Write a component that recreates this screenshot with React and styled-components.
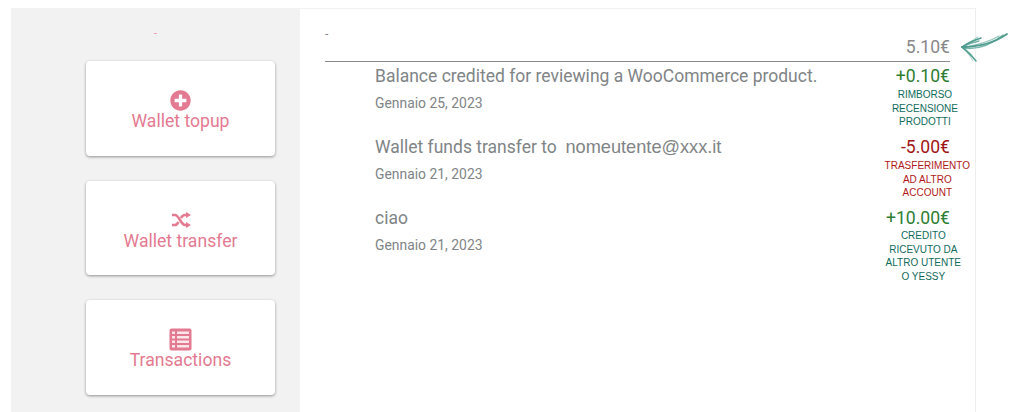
import React from 'react';
import styled, { createGlobalStyle } from 'styled-components';
import { FaPlusCircle } from 'react-icons/fa';

const pink = '#e47a91';

const GlobalStyle = createGlobalStyle`
  html, body {
    margin: 0;
    height: 412px;
    overflow: hidden;
    background: #fff;
    font-family: Roboto, sans-serif;
  }
`;

const Page = styled.div`
  height: 404px;
  padding: 8px 0 0 11px;
  width: 965px;
  display: flex;
`;

const Sidebar = styled.aside`
  width: 289px;
  flex-shrink: 0;
  background: #f2f2f2;
  padding-top: 15px;
  box-sizing: border-box;
  display: flex;
  flex-direction: column;
`;

const SideDash = styled.div`
  height: 38px;
  font-size: 12px;
  line-height: 20px;
  color: #eda5b4;
  text-align: center;
`;

const CardList = styled.div`
  display: flex;
  flex-direction: column;
  gap: 25px;
  padding: 0 25px 0 75px;
`;

const Card = styled.a`
  height: 94.5px;
  background: #fff;
  border-radius: 4px;
  box-shadow: 0 1px 3px rgba(0, 0, 0, 0.4);
  color: ${pink};
  display: flex;
  flex-direction: column;
  align-items: center;
  padding-top: 28px;
  box-sizing: border-box;
  font-size: 17.6px;
  line-height: 22px;
  font-weight: 400;
`;

const CardIcon = styled.span`
  height: 22px;
  display: flex;
  align-items: center;
  font-size: 21px;
  margin-bottom: -1px;
`;

const Content = styled.main`
  width: 676px;
  box-sizing: border-box;
  background: #fff;
  border-top: 1px solid #f1f1f1;
  border-right: 1px solid #eeeeee;
  padding: 15px 25px 0 25px;
  position: relative;
`;

const Header = styled.div`
  height: 37px;
  border-bottom: 1px solid #8a8a8a;
  display: flex;
  justify-content: space-between;
  align-items: flex-end;
  color: #888;
`;

const HeadDash = styled.span`
  align-self: flex-start;
  font-size: 12px;
  line-height: 20px;
`;

const Balance = styled.span`
  font-size: 17.6px;
  line-height: 24px;
  margin-bottom: 2px;
`;

const Arrow = styled.svg`
  position: absolute;
  left: 661px;
  top: 23px;
  width: 48px;
  height: 32px;
`;

const Row = styled.div`
  height: 71px;
  display: flex;
  justify-content: space-between;
  padding-left: 50px;
`;

const Info = styled.div`
  display: flex;
  flex-direction: column;
`;

const Title = styled.div`
  font-size: 17.5px;
  line-height: 24px;
  margin-top: 2px;
  color: #808486;
  white-space: pre;
`;

const Email = styled.span`
  font-family: 'Liberation Sans', Arial, sans-serif;
  font-size: 18.2px;
`;

const DateLine = styled.div`
  font-size: 13.9px;
  line-height: 20px;
  margin-top: 5px;
  color: #808486;
`;

const AmountCol = styled.div`
  display: flex;
  flex-direction: column;
  align-items: flex-end;
`;

const Amount = styled.div`
  font-size: 17.6px;
  line-height: 24px;
  margin-top: 2px;
  color: ${props => props.$color};
`;

const Label = styled.div`
  font-family: 'Liberation Sans', Arial, sans-serif;
  font-size: 10px;
  line-height: 13.5px;
  margin-top: ${props => props.$top}px;
  margin-right: ${props => props.$shift}px;
  text-align: center;
  white-space: pre;
  color: ${props => props.$color};
`;

const ShuffleIcon = () => (
  <svg width="20" height="16" viewBox="0 0 20 16" fill="none" stroke={pink} strokeWidth="2.6">
    <path d="M1 3h3c4 0 6 10 10 10h2" />
    <path d="M1 13h3c1.500 0 2.500-1.200 3.500-3M10 6c1-1.800 2.200-3 4-3h2" />
    <path d="M15 0l5 3-5 3zM15 10l5 3-5 3z" fill={pink} stroke="none" />
  </svg>
);

const TableIcon = () => (
  <svg width="23" height="23" viewBox="0 0 23 23">
    <rect x="0.500" y="0.500" width="22" height="22" rx="2" fill={pink} />
    <path
      d="M3 3.500h3v2.500h-3zM8 3.500h12v2.500h-12zM3 8h3v2.500h-3zM8 8h12v2.500h-12zM3 12.500h3v2.500h-3zM8 12.500h12v2.500h-12zM3 17h3v2.500h-3zM8 17h12v2.500h-12z"
      fill="#fbe6ea"
    />
  </svg>
);

const rows = [
  {
    title: 'Balance credited for reviewing a WooCommerce product.',
    date: 'Gennaio 25, 2023',
    amount: '+0.10€',
    color: '#2e7d32',
    labelColor: '#0f6b5c',
    label: 'RIMBORSO\nRECENSIONE\nPRODOTTI',
    shift: -8,
    top: 0,
  },
  {
    title: 'Wallet funds transfer to  ',
    email: 'nomeutente@xxx.it',
    date: 'Gennaio 21, 2023',
    amount: '-5.00€',
    color: '#a31515',
    labelColor: '#b01818',
    label: 'TRASFERIMENTO\nAD ALTRO\nACCOUNT',
    shift: -20,
    top: 0,
  },
  {
    title: 'ciao',
    date: 'Gennaio 21, 2023',
    amount: '+10.00€',
    color: '#2e7d32',
    labelColor: '#0f6b5c',
    label: 'CREDITO\nRICEVUTO DA\nALTRO UTENTE\nO YESSY',
    shift: -11,
    top: -1,
  },
];

export default function App() {
  return (
    <>
      <GlobalStyle />
      <Page>
        <Sidebar>
          <SideDash>-</SideDash>
          <CardList>
            <Card>
              <CardIcon><FaPlusCircle /></CardIcon>
              Wallet topup
            </Card>
            <Card>
              <CardIcon><ShuffleIcon /></CardIcon>
              Wallet transfer
            </Card>
            <Card>
              <CardIcon><TableIcon /></CardIcon>
              Transactions
            </Card>
          </CardList>
        </Sidebar>
        <Content>
          <Header>
            <HeadDash>-</HeadDash>
            <Balance>5.10€</Balance>
          </Header>
          <Arrow viewBox="0 0 48 32" fill="none" stroke="#4f9c8f" strokeLinecap="round">
            <path d="M1 15C14 15 30 13 46 2" strokeWidth="1.8" />
            <path d="M2 16C16 18 30 13 42 3" strokeWidth="1.6" opacity="0.75" />
            <path d="M4 15C16 13 28 10 38 4" strokeWidth="1.2" opacity="0.6" />
            <path d="M1 15C8 10 14 8 20 6" strokeWidth="1.5" />
            <path d="M1 15C7 12 13 10 18 9" strokeWidth="1.3" opacity="0.8" />
            <path d="M3 14C8 11 12 8 17 5" strokeWidth="1" opacity="0.6" />
            <path d="M1 15C5 19 11 24 15 29" strokeWidth="1.4" />
            <path d="M3 16C7 20 11 22 13 27" strokeWidth="1.1" opacity="0.7" />
            <path d="M2 15C6 20 9 24 12 29" strokeWidth="0.9" opacity="0.5" />
          </Arrow>
          {rows.map(row => (
            <Row key={row.title}>
              <Info>
                <Title>{row.title}{row.email && <Email>{row.email}</Email>}</Title>
                <DateLine>{row.date}</DateLine>
              </Info>
              <AmountCol>
                <Amount $color={row.color}>{row.amount}</Amount>
                <Label $color={row.labelColor} $shift={row.shift} $top={row.top}>{row.label}</Label>
              </AmountCol>
            </Row>
          ))}
        </Content>
      </Page>
    </>
  );
}
